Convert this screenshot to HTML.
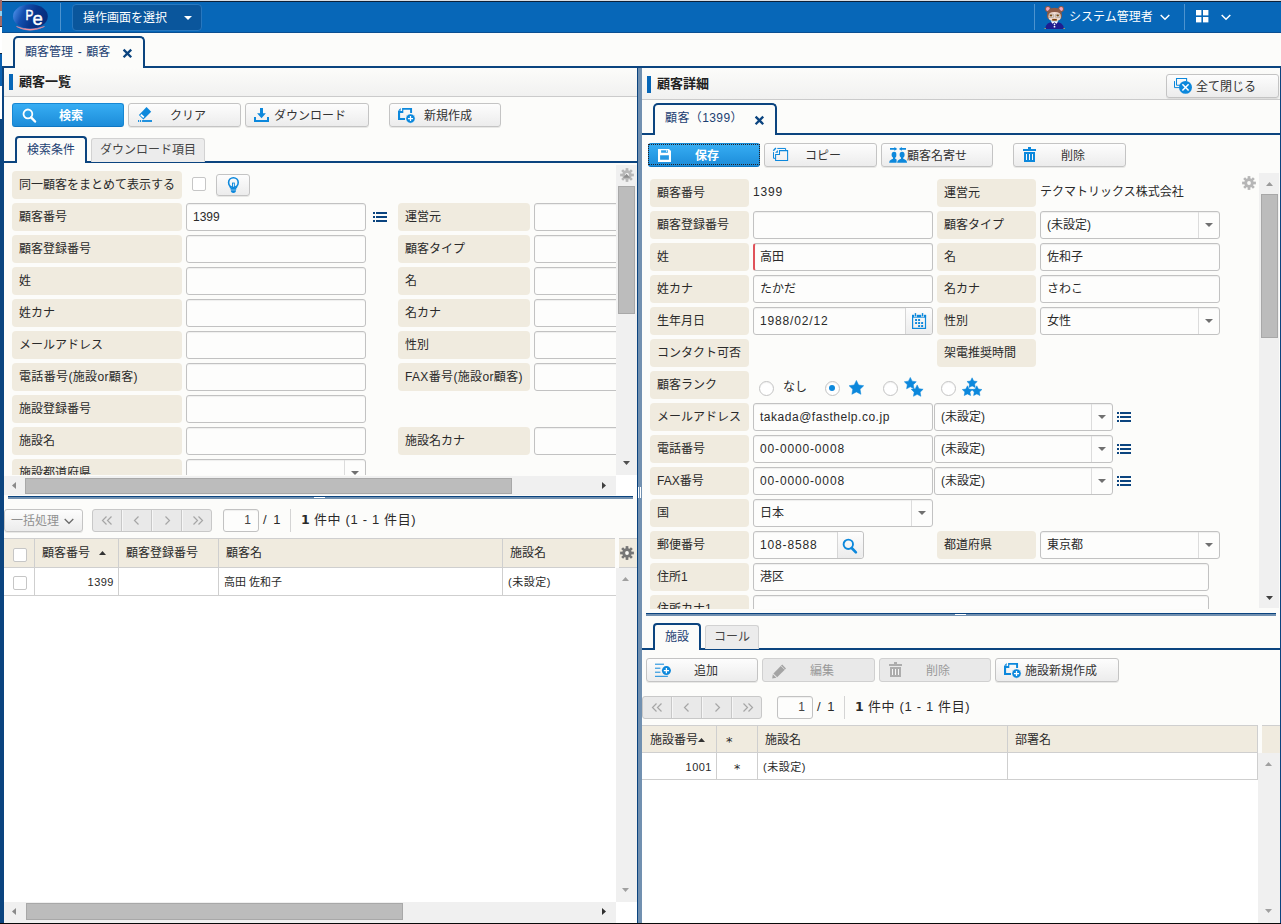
<!DOCTYPE html><html lang="ja"><head><meta charset="utf-8"><title>顧客管理</title><style>
html,body{margin:0;padding:0;}
body{width:1281px;height:924px;position:relative;overflow:hidden;background:#fcfcfa;
 font-family:"Liberation Sans","Noto Sans CJK JP",sans-serif;font-size:12px;color:#2a2a2a;}
div,span,i,b{position:absolute;box-sizing:border-box;white-space:nowrap;}
svg{position:absolute;overflow:visible;}
b{font-weight:bold;}
.lb{background:#f0ebdf;border-radius:4px;padding-left:7px;line-height:29px;}
.in{background:#fdfdfc;border:1px solid #c2c2c2;border-radius:3px;padding-left:6px;line-height:27px;
 box-shadow:inset 0 1px 1px rgba(0,0,0,.06);}
.in span{position:static;}
.se .sc{right:20px;top:0;width:1px;height:100%;background:#dcdcdc;}
.se .ca{right:6px;top:11px;width:0;height:0;border-left:4px solid transparent;border-right:4px solid transparent;border-top:4px solid #707070;}
.bt{border:1px solid #c4c4c4;border-radius:3px;background:linear-gradient(#fdfdfd,#ececec);
 box-shadow:0 1px 0 rgba(0,0,0,.08);line-height:22px;color:#333;}
.bt .t{top:1px;}
.bp{border:1px solid #1787d3;border-bottom-color:#0e76c2;border-radius:3px;background:linear-gradient(#37adf3,#1c8cd9);color:#fff;font-weight:bold;line-height:22px;}
.bp .t{top:1px;}
.bd{border:1px solid #d0d0d0;border-radius:3px;background:#e9e9e9;color:#9a9a9a;line-height:22px;}
.bd .t{top:1px;}
.clip{overflow:hidden;}
.n{position:static;letter-spacing:.85px;}
.m{position:static;letter-spacing:.52px;}
.gh{background:#f0ebdf;line-height:27px;}
.vl{width:1px;background:#cfcfcf;}
.hl{height:1px;background:#cfcfcf;}
.sbt{background:#f0f0f0;}
.sbh{background:#bcbcbc;border:1px solid #a8a8a8;}
.ar{width:0;height:0;}
.pg{border:1px solid #c8c8c8;background:#e9e9e9;border-radius:3px;}
.pg i{top:0;width:2px;height:100%;background:#c8c8c8;border-right:1px solid #f6f6f6;}
.pg span{top:0;line-height:20px;color:#9a9a9a;font-size:15px;width:30px;text-align:center;}
</style></head><body>
<div style="left:0px;top:0px;width:1281px;height:1px;background:#d9dde3;"></div>
<div style="left:0px;top:1px;width:1281px;height:1px;background:#0c2038;"></div>
<div style="left:0px;top:0px;width:2px;height:26px;background:#a26a68;"></div>
<div style="left:0px;top:26px;width:2px;height:1px;background:#3a2020;"></div>
<div style="left:0px;top:27px;width:2px;height:27px;background:#ffffff;"></div>
<div style="left:0px;top:53px;width:2px;height:1px;background:#10253c;"></div>
<div style="left:0px;top:54px;width:2px;height:32px;background:#0a60b0;"></div>
<div style="left:0px;top:86px;width:2px;height:33px;background:#ffffff;"></div>
<div style="left:0px;top:119px;width:2px;height:804px;background:#0b447f;"></div>
<div style="left:2px;top:2px;width:1279px;height:30px;background:#0767b8;"></div>
<div style="left:2px;top:32px;width:1279px;height:1px;background:#0a4f92;"></div>
<svg style="left:12px;top:4px" width="38" height="28" viewBox="0 0 38 28"><defs><linearGradient id="lg" x1="0" y1="0.3" x2="1" y2="0.6"><stop offset="0" stop-color="#4b8de6"/><stop offset="0.28" stop-color="#1450b0"/><stop offset="0.6" stop-color="#08368c"/><stop offset="1" stop-color="#062c7c"/></linearGradient></defs><path d="M4.5 22.5 Q17.5 30 32.5 22.5 Q17.5 27.5 4.5 22.5Z" fill="#f58ea0" stroke="#f58ea0" stroke-width=".5"/><ellipse cx="18.4" cy="12.4" rx="17.4" ry="12.2" fill="url(#lg)"/><text transform="translate(13.6 15.6) scale(.76 1)" font-family="Liberation Sans,sans-serif" font-size="15.5" fill="#fff" stroke="#fff" stroke-width=".5">P</text><text x="20.6" y="20.6" font-family="Liberation Sans,sans-serif" font-size="18.5" fill="#fff" stroke="#fff" stroke-width=".4">e</text></svg>
<div style="left:60px;top:3px;width:1px;height:28px;background:#4d93cf;"></div>
<div style="left:0px;top:11px;width:2px;height:5px;background:#8fd0f0;"></div>
<div style="left:72px;top:4px;width:130px;height:27px;background:#0a569c;border:1px solid #2877be;border-radius:4px;"></div>
<span style="left:83px;top:5px;line-height:26px;color:#fff;font-size:12px;font-weight:400;">操作画面を選択</span>
<div style="left:184px;top:16px;width:0px;height:0px;border-left:4px solid transparent;border-right:4px solid transparent;border-top:4px solid #fff;"></div>
<div style="left:1034px;top:4px;width:1px;height:26px;background:#4d93cf;"></div>
<svg style="left:1045px;top:6px" width="19" height="23" viewBox="0 0 19 23"><circle cx="2.9" cy="3" r="2.9" fill="#8d5b46"/><circle cx="16.1" cy="3" r="2.9" fill="#8d5b46"/><circle cx="2.9" cy="3" r="1.9" fill="#f8a3ba"/><circle cx="16.1" cy="3" r="1.9" fill="#f8a3ba"/><path d="M1.9 9.5 Q1.9 1.8 9.5 1.8 Q17 1.8 17 9.5 Q17 14.6 9.5 14.6 Q1.9 14.6 1.9 9.5Z" fill="#8d5b46"/><path d="M3.4 10.4 Q3.4 6 9.5 6 Q15.9 6 15.9 10.4 Q15.9 15.2 9.5 15.2 Q3.4 15.2 3.4 10.4Z" fill="#f1dbd0"/><rect x="4" y="8.2" width="4.6" height="3.4" rx=".8" fill="#e4dcd2" stroke="#9a8f88" stroke-width=".6"/><rect x="10.4" y="8.2" width="4.6" height="3.4" rx=".8" fill="#e4dcd2" stroke="#9a8f88" stroke-width=".6"/><ellipse cx="6" cy="9.6" rx="1.3" ry="1" fill="#7a4a14"/><ellipse cx="12.7" cy="9.6" rx="1.3" ry="1" fill="#7a4a14"/><rect x="7.2" y="12.9" width="4.6" height="1.8" fill="#7a3f08"/><path d="M0.3 22.9 Q0.6 15.8 9.5 15.8 Q18.6 15.8 18.9 22.9Z" fill="#1f1d90"/><path d="M5.8 15.2 H13.2 L11.6 17.8 L9.5 16.2 L7.4 17.8Z" fill="#fff"/><circle cx="9.5" cy="18.4" r=".8" fill="#fff"/><circle cx="9.5" cy="20.7" r=".9" fill="#fff"/><rect x="-0.6" y="22" width="1.6" height="1" fill="#9a9a6a"/><rect x="18.4" y="22" width="1.6" height="1" fill="#9a9a6a"/></svg>
<span style="left:1069px;top:4px;line-height:26px;color:#fff;font-size:12px;font-weight:400;">システム管理者</span>
<svg style="left:1160px;top:14px" width="10" height="7" viewBox="0 0 10 7"><path d="M0.7 1 L5 5.3 L9.3 1" fill="none" stroke="#fff" stroke-width="1.5"/></svg>
<div style="left:1184px;top:4px;width:1px;height:26px;background:#4d93cf;"></div>
<svg style="left:1196px;top:10px" width="13" height="13" viewBox="0 0 13 13"><rect x="0" y="0" width="5.4" height="5.4" fill="#fff"/><rect x="7" y="0" width="5.4" height="5.4" fill="#fff"/><rect x="0" y="7" width="5.4" height="5.4" fill="#fff"/><rect x="7" y="7" width="5.4" height="5.4" fill="#fff"/></svg>
<svg style="left:1221px;top:14px" width="10" height="7" viewBox="0 0 10 7"><path d="M0.7 1 L5 5.3 L9.3 1" fill="none" stroke="#fff" stroke-width="1.5"/></svg>
<div style="left:2px;top:66px;width:1279px;height:2px;background:#0b447f;"></div>
<div style="left:13px;top:36px;width:132px;height:32px;border:2px solid #0b447f;border-bottom:none;border-radius:5px 5px 0 0;background:#fcfcfa;"></div>
<span style="left:25px;top:39px;line-height:26px;color:#1c3f72;font-size:12px;word-spacing:1.3px;">顧客管理 - 顧客</span>
<svg style="left:122px;top:48px" width="11" height="11" viewBox="0 0 11 11"><path d="M1.6 1.6 L9.2 9.2 M9.2 1.6 L1.6 9.2" stroke="#0b447f" stroke-width="2.3" fill="none"/></svg>
<div style="left:2px;top:66px;width:2px;height:857px;background:#0b447f;"></div>
<div style="left:637px;top:68px;width:1px;height:855px;background:#0b447f;"></div>
<div style="left:638px;top:68px;width:4px;height:855px;background:#7190b0;"></div>
<div style="left:638px;top:487px;width:1px;height:11px;background:#fff;"></div>
<div style="left:640px;top:487px;width:1px;height:11px;background:#fff;"></div>
<div style="left:1280px;top:66px;width:1px;height:857px;background:#0b447f;"></div>
<div style="left:4px;top:68px;width:633px;height:28px;background:linear-gradient(#fcfcfa,#f1f1f0);"></div>
<div style="left:4px;top:96px;width:633px;height:1px;background:#cbcbcb;"></div>
<div style="left:9px;top:74px;width:4px;height:16px;background:#0767b8;"></div>
<b style="left:19px;top:69px;line-height:26px;font-size:13px;color:#222;">顧客一覧</b>
<div class="bp" style="left:12px;top:103px;width:112px;height:24px;"><svg style="left:9px;top:4px" width="15" height="15" viewBox="0 0 16 16"><circle cx="6.3" cy="6.3" r="4.7" fill="none" stroke="#fff" stroke-width="1.9"/><path d="M9.7 10 L13.9 14.4" stroke="#fff" stroke-width="2.6" stroke-linecap="round"/></svg><span class="t" style="left:46px;">検索</span></div>
<div class="bt" style="left:128px;top:103px;width:113px;height:24px;"><svg style="left:9px;top:3px" width="15" height="15" viewBox="0 0 15 15"><polygon points="8.55,0 13.2,4.7 5.4,12.5 0.9,8" fill="#0c88dc"/><polygon points="3.5,6.9 6.4,9.8 5.2,11.1 2.2,8.2" fill="#fff"/><rect x="0" y="13.1" width="1.1" height="1.8" fill="#0c88dc"/><rect x="1.9" y="13.1" width="1.2" height="1.8" fill="#0c88dc"/><rect x="4.05" y="13.1" width="9.95" height="1.8" fill="#0c88dc"/></svg><span class="t" style="left:41px;">クリア</span></div>
<div class="bt" style="left:245px;top:103px;width:124px;height:24px;"><svg style="left:7px;top:3px" width="17" height="16" viewBox="0 0 17 16"><path d="M7 1 H10 V6.3 H12.9 L8.5 11.2 L4.1 6.3 H7Z" fill="#0c88dc"/><path d="M2 10 V13.9 H15 V10" fill="none" stroke="#0c88dc" stroke-width="2"/></svg><span class="t" style="left:28px;">ダウンロード</span></div>
<div class="bt" style="left:389px;top:103px;width:112px;height:24px;"><svg style="left:8px;top:3px" width="18" height="17" viewBox="0 0 18 17"><polygon points="2.7,1 2.7,3.7 0,3.7" fill="#0c88dc"/><path d="M4.1 1 H14.05 V5.9 H12.1 V2.8 H5.3 V5.9 H2.1 V11 H7 V12.9 H0 V4.1 H4.1Z" fill="#0c88dc"/><circle cx="12.5" cy="11.55" r="4.6" fill="#0c88dc" stroke="#f6f6f6" stroke-width=".5"/><path d="M12.5 9 V14.1 M9.95 11.55 H15.05" stroke="#fff" stroke-width="1.25"/></svg><span class="t" style="left:34px;">新規作成</span></div>
<div style="left:4px;top:161px;width:633px;height:2px;background:#0b447f;"></div>
<div style="left:91px;top:138px;width:114px;height:24px;background:#ececec;border:1px solid #d2d2d2;border-bottom:none;border-radius:3px 3px 0 0;"></div>
<span style="left:100px;top:139px;line-height:22px;color:#444;font-size:12px;">ダウンロード項目</span>
<div style="left:15px;top:136px;width:72px;height:27px;border:2px solid #0b447f;border-bottom:none;border-radius:4px 4px 0 0;background:#fcfcfa;"></div>
<span style="left:27px;top:139px;line-height:22px;color:#1c3f72;font-size:12px;">検索条件</span>
<div class="clip" style="left:4px;top:163px;width:612px;height:312px;"><div class="lb" style="left:8px;top:8px;width:170px;height:28px;">同一顧客をまとめて表示する</div><div style="left:188px;top:14px;width:14px;height:14px;background:#fff;border:1px solid #c6c6c6;border-radius:2px;"></div><div class="bt" style="left:212px;top:11px;width:34px;height:22px;"><svg style="left:9px;top:1px" width="15" height="18" viewBox="0 0 15 18"><circle cx="7.4" cy="6.5" r="4.8" fill="none" stroke="#0c88dc" stroke-width="1.6"/><path d="M3.7 10.2 L5.3 12.4 V13 H9.5 V12.4 L11.1 10.2" fill="none" stroke="#0c88dc" stroke-width="1.5"/><rect x="6" y="6.6" width="2.8" height="6.4" fill="#0c88dc"/><rect x="6.95" y="7.5" width=".9" height="3.2" fill="#fff"/><path d="M4.8 14.2 H10 Q10 16.9 7.4 16.9 Q4.8 16.9 4.8 14.2Z" fill="#0c88dc"/></svg></div><div class="lb" style="left:8px;top:40px;width:170px;height:28px;">顧客番号</div><div class="in" style="left:182px;top:40px;width:180px;height:28px;">1399</div><div class="lb" style="left:394px;top:40px;width:132px;height:28px;">運営元</div><div class="in" style="left:530px;top:40px;width:180px;height:28px;"></div><div class="lb" style="left:8px;top:72px;width:170px;height:28px;">顧客登録番号</div><div class="in" style="left:182px;top:72px;width:180px;height:28px;"></div><div class="lb" style="left:394px;top:72px;width:132px;height:28px;">顧客タイプ</div><div class="in" style="left:530px;top:72px;width:180px;height:28px;"></div><div class="lb" style="left:8px;top:104px;width:170px;height:28px;">姓</div><div class="in" style="left:182px;top:104px;width:180px;height:28px;"></div><div class="lb" style="left:394px;top:104px;width:132px;height:28px;">名</div><div class="in" style="left:530px;top:104px;width:180px;height:28px;"></div><div class="lb" style="left:8px;top:136px;width:170px;height:28px;">姓カナ</div><div class="in" style="left:182px;top:136px;width:180px;height:28px;"></div><div class="lb" style="left:394px;top:136px;width:132px;height:28px;">名カナ</div><div class="in" style="left:530px;top:136px;width:180px;height:28px;"></div><div class="lb" style="left:8px;top:168px;width:170px;height:28px;">メールアドレス</div><div class="in" style="left:182px;top:168px;width:180px;height:28px;"></div><div class="lb" style="left:394px;top:168px;width:132px;height:28px;">性別</div><div class="in" style="left:530px;top:168px;width:180px;height:28px;"></div><div class="lb" style="left:8px;top:200px;width:170px;height:28px;"><span class="m" style="letter-spacing:.35px">電話番号(施設or顧客)</span></div><div class="in" style="left:182px;top:200px;width:180px;height:28px;"></div><div class="lb" style="left:394px;top:200px;width:132px;height:28px;"><span class="m" style="letter-spacing:.35px">FAX番号(施設or顧客)</span></div><div class="in" style="left:530px;top:200px;width:180px;height:28px;"></div><div class="lb" style="left:8px;top:232px;width:170px;height:28px;">施設登録番号</div><div class="in" style="left:182px;top:232px;width:180px;height:28px;"></div><div class="lb" style="left:8px;top:264px;width:170px;height:28px;">施設名</div><div class="in" style="left:182px;top:264px;width:180px;height:28px;"></div><div class="lb" style="left:394px;top:264px;width:132px;height:28px;">施設名カナ</div><div class="in" style="left:530px;top:264px;width:180px;height:28px;"></div><div class="lb" style="left:8px;top:296px;width:170px;height:28px;">施設都道府県</div><div class="in se" style="left:182px;top:296px;width:180px;height:28px;"><span></span><i class="sc"></i><i class="ca"></i></div><svg style="left:369px;top:49px" width="14" height="10" viewBox="0 0 14 10"><rect x="0" y="0" width="2" height="2" fill="#0b447f"/><rect x="3" y="0" width="11" height="2" fill="#0b447f"/><rect x="0" y="4" width="2" height="2" fill="#0b447f"/><rect x="3" y="4" width="11" height="2" fill="#0b447f"/><rect x="0" y="8" width="2" height="2" fill="#0b447f"/><rect x="3" y="8" width="11" height="2" fill="#0b447f"/></svg></div>
<div class="sbt" style="left:616px;top:165px;width:21px;height:310px;"></div>
<svg style="left:620px;top:168px" width="14" height="14" viewBox="0 0 14 14"><g transform="translate(7 7)"><rect x="-1.35" y="-6.9" width="2.7" height="3.2" fill="#b8b8b8" transform="rotate(0)"/><rect x="-1.35" y="-6.9" width="2.7" height="3.2" fill="#b8b8b8" transform="rotate(45)"/><rect x="-1.35" y="-6.9" width="2.7" height="3.2" fill="#b8b8b8" transform="rotate(90)"/><rect x="-1.35" y="-6.9" width="2.7" height="3.2" fill="#b8b8b8" transform="rotate(135)"/><rect x="-1.35" y="-6.9" width="2.7" height="3.2" fill="#b8b8b8" transform="rotate(180)"/><rect x="-1.35" y="-6.9" width="2.7" height="3.2" fill="#b8b8b8" transform="rotate(225)"/><rect x="-1.35" y="-6.9" width="2.7" height="3.2" fill="#b8b8b8" transform="rotate(270)"/><rect x="-1.35" y="-6.9" width="2.7" height="3.2" fill="#b8b8b8" transform="rotate(315)"/><circle r="4.7" fill="#b8b8b8"/><circle r="1.9" fill="#fafafa"/><path d="M-3.9 2.8 L-0.4 -1.2 L3.1 2.8Z" fill="#8e8e8e"/></g></svg>
<div class="sbh" style="left:618px;top:186px;width:17px;height:128px;"></div>
<svg style="left:623px;top:461px" width="7" height="4" viewBox="0 0 7 4"><path d="M0 0 L3.5 4 L7 0Z" fill="#505050"/></svg>
<div class="sbt" style="left:4px;top:476px;width:612px;height:19px;"></div>
<div style="left:616px;top:475px;width:21px;height:21px;background:#fff;"></div>
<svg style="left:12px;top:482px" width="4" height="7" viewBox="0 0 4 7"><path d="M4 0 L0 3.5 L4 7Z" fill="#8a8a8a"/></svg>
<div class="sbh" style="left:25px;top:478px;width:487px;height:16px;"></div>
<svg style="left:602px;top:482px" width="4" height="7" viewBox="0 0 4 7"><path d="M0 0 L4 3.5 L0 7Z" fill="#404040"/></svg>
<div style="left:8px;top:496px;width:625px;height:1px;background:#0b447f;"></div>
<div style="left:8px;top:497px;width:625px;height:2px;background:#7190b0;"></div>
<div style="left:314px;top:497px;width:11px;height:1px;background:#fff;"></div>
<div class="bt" style="left:4px;top:509px;width:79px;height:23px;color:#909090;"><span class="t" style="left:6px;top:0;">一括処理</span><svg style="left:59px;top:8px" width="10" height="7" viewBox="0 0 10 7"><path d="M0.7 1 L5 5.3 L9.3 1" fill="none" stroke="#6a6a6a" stroke-width="1.25"/></svg></div>
<div class="pg" style="left:92px;top:509px;width:120px;height:23px;"><i style="left:28px"></i><i style="left:58px"></i><i style="left:88px"></i><svg style="left:0;top:6px" width="120" height="10"><path d="M13.5 0.5 L9.5 4.5 L13.5 8.5" fill="none" stroke="#a6a6a6" stroke-width="1.2"/><path d="M18.5 0.5 L14.5 4.5 L18.5 8.5" fill="none" stroke="#a6a6a6" stroke-width="1.2"/><path d="M45.5 0.5 L41.5 4.5 L45.5 8.5" fill="none" stroke="#a6a6a6" stroke-width="1.2"/><path d="M72.5 0.5 L76.5 4.5 L72.5 8.5" fill="none" stroke="#a6a6a6" stroke-width="1.2"/><path d="M100.5 0.5 L104.5 4.5 L100.5 8.5" fill="none" stroke="#a6a6a6" stroke-width="1.2"/><path d="M105.5 0.5 L109.5 4.5 L105.5 8.5" fill="none" stroke="#a6a6a6" stroke-width="1.2"/></svg></div>
<div class="in" style="left:223px;top:509px;width:36px;height:23px;text-align:right;padding-right:7px;line-height:20px;color:#444;">1</div>
<span style="left:263px;top:509px;line-height:22px;font-size:13px;word-spacing:2px;letter-spacing:.5px;">/ 1</span>
<div style="left:290px;top:509px;width:1px;height:23px;background:#d4d4d4;"></div>
<span style="left:301px;top:509px;line-height:22px;font-size:13px;letter-spacing:.65px;"><b style="position:static;font-family:DejaVu Sans,sans-serif;font-size:12.5px;letter-spacing:0">1</b> 件中 (1 - 1 件目)</span>
<div class="gh" style="left:4px;top:539px;width:611px;height:29px;"></div>
<div class="gh" style="left:619px;top:539px;width:18px;height:29px;"></div>
<div style="left:4px;top:568px;width:612px;height:334px;background:#fff;"></div>
<div class="vl" style="left:34px;top:539px;width:1px;height:57px;"></div>
<div class="vl" style="left:118px;top:539px;width:1px;height:57px;"></div>
<div class="vl" style="left:218px;top:539px;width:1px;height:57px;"></div>
<div class="vl" style="left:502px;top:539px;width:1px;height:57px;"></div>
<div class="hl" style="left:4px;top:567px;width:611px;height:1px;"></div>
<div class="hl" style="left:619px;top:567px;width:18px;height:1px;"></div>
<div class="hl" style="left:4px;top:538px;width:611px;height:1px;"></div>
<div class="hl" style="left:619px;top:538px;width:18px;height:1px;"></div>
<div class="hl" style="left:4px;top:595px;width:612px;height:1px;"></div>
<div style="left:13px;top:548px;width:14px;height:14px;background:#fff;border:1px solid #c6c6c6;border-radius:2px;"></div>
<div style="left:13px;top:576px;width:14px;height:14px;background:#fff;border:1px solid #c6c6c6;border-radius:2px;"></div>
<span style="left:42px;top:540px;line-height:27px;">顧客番号</span>
<svg style="left:99px;top:551px" width="7" height="4" viewBox="0 0 7 4"><path d="M0 4 L3.5 0 L7 4Z" fill="#333"/></svg>
<span style="left:126px;top:540px;line-height:27px;">顧客登録番号</span>
<span style="left:226px;top:540px;line-height:27px;">顧客名</span>
<span style="left:510px;top:540px;line-height:27px;">施設名</span>
<svg style="left:620px;top:546px" width="14" height="14" viewBox="0 0 14 14"><g transform="translate(7 7)"><rect x="-1.35" y="-6.9" width="2.7" height="3.2" fill="#767676" transform="rotate(0)"/><rect x="-1.35" y="-6.9" width="2.7" height="3.2" fill="#767676" transform="rotate(45)"/><rect x="-1.35" y="-6.9" width="2.7" height="3.2" fill="#767676" transform="rotate(90)"/><rect x="-1.35" y="-6.9" width="2.7" height="3.2" fill="#767676" transform="rotate(135)"/><rect x="-1.35" y="-6.9" width="2.7" height="3.2" fill="#767676" transform="rotate(180)"/><rect x="-1.35" y="-6.9" width="2.7" height="3.2" fill="#767676" transform="rotate(225)"/><rect x="-1.35" y="-6.9" width="2.7" height="3.2" fill="#767676" transform="rotate(270)"/><rect x="-1.35" y="-6.9" width="2.7" height="3.2" fill="#767676" transform="rotate(315)"/><circle r="4.7" fill="#767676"/><circle r="1.9" fill="#fbfaf6"/></g></svg>
<span style="left:35px;top:569px;width:79px;text-align:right;line-height:27px;font-size:11px;letter-spacing:.5px;">1399</span>
<span style="left:224px;top:569px;line-height:27px;font-size:11px;">高田 佐和子</span>
<span style="left:508px;top:569px;line-height:27px;font-size:11px;letter-spacing:.5px;">(未設定)</span>
<div class="sbt" style="left:616px;top:568px;width:21px;height:334px;"></div>
<svg style="left:622px;top:577px" width="7" height="4" viewBox="0 0 7 4"><path d="M0 4 L3.5 0 L7 4Z" fill="#a0a0a0"/></svg>
<svg style="left:622px;top:888px" width="7" height="4" viewBox="0 0 7 4"><path d="M0 0 L3.5 4 L7 0Z" fill="#a0a0a0"/></svg>
<div class="sbt" style="left:4px;top:902px;width:612px;height:21px;"></div>
<div style="left:616px;top:902px;width:21px;height:21px;background:#fff;"></div>
<svg style="left:12px;top:908px" width="4" height="7" viewBox="0 0 4 7"><path d="M4 0 L0 3.5 L4 7Z" fill="#8a8a8a"/></svg>
<div class="sbh" style="left:26px;top:903px;width:377px;height:17px;"></div>
<svg style="left:602px;top:908px" width="4" height="7" viewBox="0 0 4 7"><path d="M0 0 L4 3.5 L0 7Z" fill="#303030"/></svg>
<div style="left:642px;top:68px;width:638px;height:31px;background:linear-gradient(#fcfcfa,#f1f1f0);"></div>
<div style="left:642px;top:99px;width:638px;height:1px;background:#cbcbcb;"></div>
<div style="left:647px;top:76px;width:4px;height:17px;background:#0767b8;"></div>
<b style="left:657px;top:71px;line-height:26px;font-size:13px;color:#222;">顧客詳細</b>
<div class="bt" style="left:1166px;top:74px;width:113px;height:24px;"><svg style="left:7px;top:2px" width="19" height="18" viewBox="0 0 19 18"><path d="M2.5 8.3 V1.5 H12.6 V4.5 M2.5 8.3 H6" fill="none" stroke="#0c88dc" stroke-width="1.05"/><path d="M0.5 4.1 V10.6 H5.5" fill="none" stroke="#0c88dc" stroke-width="1"/><circle cx="11.5" cy="10.4" r="6.45" fill="#0c88dc"/><path d="M8.4 7.3 L14.6 13.5 M14.6 7.3 L8.4 13.5" stroke="#fff" stroke-width="1.5"/></svg><span class="t" style="left:29px;">全て閉じる</span></div>
<div style="left:642px;top:133px;width:639px;height:2px;background:#0b447f;"></div>
<div style="left:653px;top:103px;width:124px;height:32px;border:2px solid #0b447f;border-bottom:none;border-radius:5px 5px 0 0;background:#fcfcfa;"></div>
<span style="left:665px;top:105px;line-height:26px;color:#1c3f72;font-size:12px;letter-spacing:.4px;">顧客（1399）</span>
<svg style="left:754px;top:115px" width="11" height="11" viewBox="0 0 11 11"><path d="M1.6 1.6 L9.2 9.2 M9.2 1.6 L1.6 9.2" stroke="#0b447f" stroke-width="2.3" fill="none"/></svg>
<div class="clip" style="left:642px;top:135px;width:618px;height:474px;"><div class="bp" style="left:6px;top:8px;width:112px;height:24px;"><svg style="left:9px;top:4px" width="14" height="15" viewBox="0 0 14 15"><path fill-rule="evenodd" fill="#fff" d="M0 .9H11L13 3V14H0Z M3.1 2.3H9.9V4.8H3.1Z M2.1 7.2H10.9V11.7H2.1Z"/><rect x="8.2" y="2.3" width=".9" height="1.6" fill="#fff"/></svg><span class="t" style="left:46px;">保存</span></div><div style="left:6px;top:9px;width:112px;height:21px;border:1px dotted #2a2222;"></div><div class="bt" style="left:122px;top:8px;width:113px;height:24px;"><svg style="left:8px;top:3px" width="16" height="15" viewBox="0 0 16 15"><path d="M6.5 3.6 H14.6 V13.4 H2.6 V7.5 H6.5Z" fill="none" stroke="#0c88dc" stroke-width="1.05"/><polygon points="4.9,3.1 4.9,5.8 2.1,5.8" fill="#0c88dc"/><path d="M4.3 1.45 H12.6 V3.2 M0.5 5.1 V11.3 H2.2" fill="none" stroke="#0c88dc" stroke-width="1"/><path d="M2.9 1.1 L0.3 3.7" stroke="#0c88dc" stroke-width="1.4"/></svg><span class="t" style="left:40px;">コピー</span></div><div class="bt" style="left:239px;top:8px;width:112px;height:24px;"><svg style="left:7px;top:3px" width="19" height="16" viewBox="0 0 19 16"><defs><clipPath id="pc"><rect x="0" y="0" width="7.6" height="16"/></clipPath></defs><path d="M1 0.95 H5.4 V0 L8.3 1.9 L5.4 3.8 V2.85 H1Z" fill="#0c88dc"/><path d="M17 0.95 H12.8 V0 L9.9 1.9 L12.8 3.8 V2.85 H17Z" fill="#0c88dc"/><g clip-path="url(#pc)"><ellipse cx="5.1" cy="7.8" rx="2.5" ry="2.95" fill="#0c88dc"/><path d="M0.09999999999999964 15.8 Q0.09999999999999964 13.3 2.3 12.5 L3.9999999999999996 11.7 V10 H6.199999999999999 V11.7 L7.8999999999999995 12.5 Q10.1 13.3 10.1 15.8Z" fill="#0c88dc"/></g><g><ellipse cx="13.1" cy="7.8" rx="2.5" ry="2.95" fill="#0c88dc"/><path d="M8.1 15.8 Q8.1 13.3 10.3 12.5 L12.0 11.7 V10 H14.2 V11.7 L15.899999999999999 12.5 Q18.1 13.3 18.1 15.8Z" fill="#0c88dc"/></g></svg><span class="t" style="left:25px;">顧客名寄せ</span></div><div class="bt" style="left:371px;top:8px;width:113px;height:24px;"><svg style="left:9px;top:3px" width="13" height="16" viewBox="0 0 13 16"><rect x="5" y="0" width="3" height="2.2" fill="#0c88dc"/><rect x="0" y="2" width="13" height="2" fill="#0c88dc"/><rect x="1" y="5" width="11" height="10" fill="#0c88dc"/><rect x="3" y="7" width="1" height="6" fill="#f6f6f6"/><rect x="6" y="7" width="1" height="6" fill="#f6f6f6"/><rect x="9" y="7" width="1" height="6" fill="#f6f6f6"/></svg><span class="t" style="left:47px;">削除</span></div><div class="lb" style="left:8px;top:44px;width:99px;height:28px;">顧客番号</div><span style="left:111px;top:44px;line-height:27px;"><span class="n">1399</span></span><div class="lb" style="left:295px;top:44px;width:99px;height:28px;">運営元</div><span style="left:398px;top:44px;line-height:27px;">テクマトリックス株式会社</span><div class="lb" style="left:8px;top:76px;width:99px;height:28px;">顧客登録番号</div><div class="in" style="left:111px;top:76px;width:180px;height:28px;"></div><div class="lb" style="left:295px;top:76px;width:99px;height:28px;">顧客タイプ</div><div class="in se" style="left:398px;top:76px;width:180px;height:28px;"><span>(未設定)</span><i class="sc"></i><i class="ca"></i></div><div class="lb" style="left:8px;top:108px;width:99px;height:28px;">姓</div><div class="in" style="left:111px;top:108px;width:180px;height:28px;border-left:2px solid #e0525a;padding-left:5px;">高田</div><div class="lb" style="left:295px;top:108px;width:99px;height:28px;">名</div><div class="in" style="left:398px;top:108px;width:180px;height:28px;">佐和子</div><div class="lb" style="left:8px;top:140px;width:99px;height:28px;">姓カナ</div><div class="in" style="left:111px;top:140px;width:180px;height:28px;">たかだ</div><div class="lb" style="left:295px;top:140px;width:99px;height:28px;">名カナ</div><div class="in" style="left:398px;top:140px;width:180px;height:28px;">さわこ</div><div class="lb" style="left:8px;top:172px;width:99px;height:28px;">生年月日</div><div class="in" style="left:111px;top:172px;width:180px;height:28px;"><span class="n">1988/02/12</span></div><div style="left:263px;top:173px;width:27px;height:26px;background:linear-gradient(#fdfdfd,#ececec);border-left:1px solid #d6d6d6;border-radius:0 3px 3px 0;"><svg style="left:6px;top:5px" width="15" height="16" viewBox="0 0 15 16"><rect x="0.6" y="2.5" width="12.9" height="12.9" fill="none" stroke="#0c88dc" stroke-width="1.2"/><rect x="0" y="1.9" width="14.1" height="2.8" fill="#0c88dc"/><rect x="2.1999999999999997" y="0" width="2.5" height="4.1" fill="#f4f4f4"/><rect x="2.8" y="0" width="1.3" height="3.6" rx=".6" fill="#0c88dc"/><rect x="9.3" y="0" width="2.5" height="4.1" fill="#f4f4f4"/><rect x="9.9" y="0" width="1.3" height="3.6" rx=".6" fill="#0c88dc"/><rect x="3.05" y="6.05" width="2" height="2" rx=".3" fill="#0c88dc"/><rect x="6.08" y="6.05" width="2" height="2" rx=".3" fill="#0c88dc"/><rect x="3.05" y="9.08" width="2" height="2" rx=".3" fill="#0c88dc"/><rect x="6.08" y="9.08" width="2" height="2" rx=".3" fill="#0c88dc"/><rect x="9.11" y="9.08" width="2" height="2" rx=".3" fill="#0c88dc"/><rect x="6.08" y="12.11" width="2" height="2" rx=".3" fill="#0c88dc"/><rect x="9.11" y="12.11" width="2" height="2" rx=".3" fill="#0c88dc"/></svg></div><div class="lb" style="left:295px;top:172px;width:99px;height:28px;">性別</div><div class="in se" style="left:398px;top:172px;width:180px;height:28px;"><span>女性</span><i class="sc"></i><i class="ca"></i></div><div class="lb" style="left:8px;top:204px;width:99px;height:28px;">コンタクト可否</div><div class="lb" style="left:295px;top:204px;width:99px;height:28px;">架電推奨時間</div><div class="lb" style="left:8px;top:236px;width:99px;height:28px;">顧客ランク</div><div style="left:116.5px;top:245.5px;width:15px;height:15px;border:1px solid #c4c4c4;border-radius:50%;background:#fff;box-shadow:inset 0 1px 1px rgba(0,0,0,.05);"></div><div style="left:182.5px;top:245.5px;width:15px;height:15px;border:1px solid #c4c4c4;border-radius:50%;background:#fff;box-shadow:inset 0 1px 1px rgba(0,0,0,.05);"><i style="left:3.5px;top:3.5px;width:6px;height:6px;border-radius:50%;background:#0c88dc;"></i></div><div style="left:240.5px;top:245.5px;width:15px;height:15px;border:1px solid #c4c4c4;border-radius:50%;background:#fff;box-shadow:inset 0 1px 1px rgba(0,0,0,.05);"></div><div style="left:298.5px;top:245.5px;width:15px;height:15px;border:1px solid #c4c4c4;border-radius:50%;background:#fff;box-shadow:inset 0 1px 1px rgba(0,0,0,.05);"></div><span style="left:141px;top:239px;line-height:27px;">なし</span><svg style="left:206px;top:241px" width="22" height="22" viewBox="0 0 22 22"><polygon points="8.40,4.40 10.66,8.99 15.72,9.72 12.06,13.29 12.93,18.33 8.40,15.95 3.87,18.33 4.74,13.29 1.08,9.72 6.14,8.99" fill="#0c88dc" stroke="#0c88dc" stroke-width=".5" stroke-linejoin="round"/></svg><svg style="left:261px;top:241px" width="22" height="22" viewBox="0 0 22 22"><polygon points="7.30,1.40 9.15,5.15 13.29,5.75 10.30,8.67 11.00,12.80 7.30,10.85 3.60,12.80 4.30,8.67 1.31,5.75 5.45,5.15" fill="#0c88dc" stroke="#0c88dc" stroke-width=".5" stroke-linejoin="round"/><polygon points="14.15,8.90 16.00,12.65 20.14,13.25 17.15,16.17 17.85,20.30 14.15,18.35 10.45,20.30 11.15,16.17 8.16,13.25 12.30,12.65" fill="#0c88dc" stroke="#0c88dc" stroke-width=".5" stroke-linejoin="round"/></svg><svg style="left:319px;top:241px" width="22" height="22" viewBox="0 0 22 22"><polygon points="11.10,1.80 12.69,5.02 16.24,5.53 13.67,8.03 14.27,11.57 11.10,9.90 7.93,11.57 8.53,8.03 5.96,5.53 9.51,5.02" fill="#0c88dc" stroke="#0c88dc" stroke-width=".5" stroke-linejoin="round"/><polygon points="6.40,9.80 7.99,13.02 11.54,13.53 8.97,16.03 9.57,19.57 6.40,17.90 3.23,19.57 3.83,16.03 1.26,13.53 4.81,13.02" fill="#0c88dc" stroke="#0c88dc" stroke-width=".5" stroke-linejoin="round"/><polygon points="15.80,9.80 17.39,13.02 20.94,13.53 18.37,16.03 18.97,19.57 15.80,17.90 12.63,19.57 13.23,16.03 10.66,13.53 14.21,13.02" fill="#0c88dc" stroke="#0c88dc" stroke-width=".5" stroke-linejoin="round"/></svg><div class="lb" style="left:8px;top:268px;width:99px;height:28px;">メールアドレス</div><div class="in" style="left:111px;top:268px;width:180px;height:28px;"><span class="m">takada@fasthelp.co.jp</span></div><div class="in se" style="left:292px;top:268px;width:179px;height:28px;"><span>(未設定)</span><i class="sc"></i><i class="ca"></i></div><svg style="left:475px;top:277px" width="14" height="10" viewBox="0 0 14 10"><rect x="0" y="0" width="2" height="2" fill="#0b447f"/><rect x="3" y="0" width="11" height="2" fill="#0b447f"/><rect x="0" y="4" width="2" height="2" fill="#0b447f"/><rect x="3" y="4" width="11" height="2" fill="#0b447f"/><rect x="0" y="8" width="2" height="2" fill="#0b447f"/><rect x="3" y="8" width="11" height="2" fill="#0b447f"/></svg><div class="lb" style="left:8px;top:300px;width:99px;height:28px;">電話番号</div><div class="in" style="left:111px;top:300px;width:180px;height:28px;"><span class="n">00-0000-0008</span></div><div class="in se" style="left:292px;top:300px;width:179px;height:28px;"><span>(未設定)</span><i class="sc"></i><i class="ca"></i></div><svg style="left:475px;top:309px" width="14" height="10" viewBox="0 0 14 10"><rect x="0" y="0" width="2" height="2" fill="#0b447f"/><rect x="3" y="0" width="11" height="2" fill="#0b447f"/><rect x="0" y="4" width="2" height="2" fill="#0b447f"/><rect x="3" y="4" width="11" height="2" fill="#0b447f"/><rect x="0" y="8" width="2" height="2" fill="#0b447f"/><rect x="3" y="8" width="11" height="2" fill="#0b447f"/></svg><div class="lb" style="left:8px;top:332px;width:99px;height:28px;">FAX番号</div><div class="in" style="left:111px;top:332px;width:180px;height:28px;"><span class="n">00-0000-0008</span></div><div class="in se" style="left:292px;top:332px;width:179px;height:28px;"><span>(未設定)</span><i class="sc"></i><i class="ca"></i></div><svg style="left:475px;top:341px" width="14" height="10" viewBox="0 0 14 10"><rect x="0" y="0" width="2" height="2" fill="#0b447f"/><rect x="3" y="0" width="11" height="2" fill="#0b447f"/><rect x="0" y="4" width="2" height="2" fill="#0b447f"/><rect x="3" y="4" width="11" height="2" fill="#0b447f"/><rect x="0" y="8" width="2" height="2" fill="#0b447f"/><rect x="3" y="8" width="11" height="2" fill="#0b447f"/></svg><div class="lb" style="left:8px;top:364px;width:99px;height:28px;">国</div><div class="in se" style="left:111px;top:364px;width:180px;height:28px;"><span>日本</span><i class="sc"></i><i class="ca"></i></div><div class="lb" style="left:8px;top:396px;width:99px;height:28px;">郵便番号</div><div class="in" style="left:111px;top:396px;width:111px;height:28px;"><span class="n">108-8588</span></div><div style="left:195px;top:397px;width:26px;height:26px;background:linear-gradient(#fdfdfd,#ececec);border-left:1px solid #d6d6d6;border-radius:0 3px 3px 0;"><svg style="left:4px;top:6px" width="16" height="16" viewBox="0 0 16 16"><circle cx="6.3" cy="6.3" r="4.7" fill="none" stroke="#0c88dc" stroke-width="1.9"/><path d="M9.7 10 L13.9 14.4" stroke="#0c88dc" stroke-width="2.6" stroke-linecap="round"/></svg></div><div class="lb" style="left:295px;top:396px;width:99px;height:28px;">都道府県</div><div class="in se" style="left:398px;top:396px;width:180px;height:28px;"><span>東京都</span><i class="sc"></i><i class="ca"></i></div><div class="lb" style="left:8px;top:428px;width:99px;height:28px;">住所1</div><div class="in" style="left:111px;top:428px;width:456px;height:28px;">港区</div><div class="lb" style="left:8px;top:460px;width:99px;height:28px;">住所カナ1</div><div class="in" style="left:111px;top:460px;width:456px;height:28px;"></div></div>
<svg style="left:1242px;top:176px" width="14" height="14" viewBox="0 0 14 14"><g transform="translate(7 7)"><rect x="-1.35" y="-6.9" width="2.7" height="3.2" fill="#b6b6b6" transform="rotate(0)"/><rect x="-1.35" y="-6.9" width="2.7" height="3.2" fill="#b6b6b6" transform="rotate(45)"/><rect x="-1.35" y="-6.9" width="2.7" height="3.2" fill="#b6b6b6" transform="rotate(90)"/><rect x="-1.35" y="-6.9" width="2.7" height="3.2" fill="#b6b6b6" transform="rotate(135)"/><rect x="-1.35" y="-6.9" width="2.7" height="3.2" fill="#b6b6b6" transform="rotate(180)"/><rect x="-1.35" y="-6.9" width="2.7" height="3.2" fill="#b6b6b6" transform="rotate(225)"/><rect x="-1.35" y="-6.9" width="2.7" height="3.2" fill="#b6b6b6" transform="rotate(270)"/><rect x="-1.35" y="-6.9" width="2.7" height="3.2" fill="#b6b6b6" transform="rotate(315)"/><circle r="4.7" fill="#b6b6b6"/><circle r="1.9" fill="#fafaf8"/></g></svg>
<div class="sbt" style="left:1259px;top:173px;width:20px;height:435px;"></div>
<svg style="left:1266px;top:182px" width="7" height="4" viewBox="0 0 7 4"><path d="M0 4 L3.5 0 L7 4Z" fill="#9a9a9a"/></svg>
<div class="sbh" style="left:1261px;top:194px;width:17px;height:144px;"></div>
<svg style="left:1266px;top:596px" width="7" height="4" viewBox="0 0 7 4"><path d="M0 0 L3.5 4 L7 0Z" fill="#404040"/></svg>
<div style="left:646px;top:613px;width:630px;height:1px;background:#0b447f;"></div>
<div style="left:646px;top:614px;width:630px;height:2px;background:#7190b0;"></div>
<div style="left:955px;top:614px;width:11px;height:1px;background:#fff;"></div>
<div style="left:642px;top:648px;width:639px;height:2px;background:#0b447f;"></div>
<div style="left:705px;top:625px;width:54px;height:24px;background:#ececec;border:1px solid #d2d2d2;border-bottom:none;border-radius:3px 3px 0 0;"></div>
<span style="left:714px;top:626px;line-height:22px;color:#444;font-size:12px;">コール</span>
<div style="left:653px;top:623px;width:48px;height:27px;border:2px solid #0b447f;border-bottom:none;border-radius:4px 4px 0 0;background:#fcfcfa;"></div>
<span style="left:665px;top:626px;line-height:22px;color:#1c3f72;font-size:12px;">施設</span>
<div class="bt" style="left:646px;top:658px;width:112px;height:24px;"><svg style="left:8px;top:4px" width="17" height="15" viewBox="0 0 17 15"><path d="M0 1.2 H9 M0 5.2 H5.4 M0 9.2 H5.4 M0 13.3 H12.9" stroke="#0c88dc" stroke-width="1"/><circle cx="11.4" cy="7.6" r="4.5" fill="#0c88dc"/><path d="M11.4 5 V10.2 M8.8 7.6 H14" stroke="#fff" stroke-width="1.3"/></svg><span class="t" style="left:47px;">追加</span></div>
<div class="bd" style="left:762px;top:658px;width:113px;height:24px;"><svg style="left:9px;top:5px" width="15" height="15" viewBox="0 0 15 15"><path d="M10.2 0.6 L14 4.4 L5.2 13.2 L1.4 9.4Z" fill="#a4a4a4"/><path d="M0.8 10.2 L4.4 13.8 L0.2 14.6Z" fill="#a4a4a4"/><path d="M9 1.8 L12.8 5.6" stroke="#e9e9e9" stroke-width=".8"/></svg><span class="t" style="left:47px;">編集</span></div>
<div class="bd" style="left:879px;top:658px;width:112px;height:24px;"><svg style="left:9px;top:3px" width="13" height="16" viewBox="0 0 13 16"><rect x="5" y="0" width="3" height="2.2" fill="#adadad"/><rect x="0" y="2" width="13" height="2" fill="#adadad"/><rect x="1" y="5" width="11" height="10" fill="#adadad"/><rect x="3" y="7" width="1" height="6" fill="#f6f6f6"/><rect x="6" y="7" width="1" height="6" fill="#f6f6f6"/><rect x="9" y="7" width="1" height="6" fill="#f6f6f6"/></svg><span class="t" style="left:46px;">削除</span></div>
<div class="bt" style="left:995px;top:658px;width:124px;height:24px;"><svg style="left:8px;top:3px" width="18" height="17" viewBox="0 0 18 17"><polygon points="2.7,1 2.7,3.7 0,3.7" fill="#0c88dc"/><path d="M4.1 1 H14.05 V5.9 H12.1 V2.8 H5.3 V5.9 H2.1 V11 H7 V12.9 H0 V4.1 H4.1Z" fill="#0c88dc"/><circle cx="12.5" cy="11.55" r="4.6" fill="#0c88dc" stroke="#f6f6f6" stroke-width=".5"/><path d="M12.5 9 V14.1 M9.95 11.55 H15.05" stroke="#fff" stroke-width="1.25"/></svg><span class="t" style="left:29px;">施設新規作成</span></div>
<div class="pg" style="left:642px;top:696px;width:120px;height:23px;"><i style="left:28px"></i><i style="left:58px"></i><i style="left:88px"></i><svg style="left:0;top:6px" width="120" height="10"><path d="M13.5 0.5 L9.5 4.5 L13.5 8.5" fill="none" stroke="#a6a6a6" stroke-width="1.2"/><path d="M18.5 0.5 L14.5 4.5 L18.5 8.5" fill="none" stroke="#a6a6a6" stroke-width="1.2"/><path d="M45.5 0.5 L41.5 4.5 L45.5 8.5" fill="none" stroke="#a6a6a6" stroke-width="1.2"/><path d="M72.5 0.5 L76.5 4.5 L72.5 8.5" fill="none" stroke="#a6a6a6" stroke-width="1.2"/><path d="M100.5 0.5 L104.5 4.5 L100.5 8.5" fill="none" stroke="#a6a6a6" stroke-width="1.2"/><path d="M105.5 0.5 L109.5 4.5 L105.5 8.5" fill="none" stroke="#a6a6a6" stroke-width="1.2"/></svg></div>
<div class="in" style="left:777px;top:696px;width:36px;height:23px;text-align:right;padding-right:7px;line-height:20px;color:#444;">1</div>
<span style="left:817px;top:696px;line-height:22px;font-size:13px;word-spacing:2px;letter-spacing:.5px;">/ 1</span>
<div style="left:844px;top:696px;width:1px;height:23px;background:#d4d4d4;"></div>
<span style="left:855px;top:696px;line-height:22px;font-size:13px;letter-spacing:.65px;"><b style="position:static;font-family:DejaVu Sans,sans-serif;font-size:12.5px;letter-spacing:0">1</b> 件中 (1 - 1 件目)</span>
<div class="gh" style="left:642px;top:725px;width:616px;height:28px;"></div>
<div class="gh" style="left:1262px;top:725px;width:18px;height:28px;"></div>
<div style="left:642px;top:753px;width:616px;height:169px;background:#fff;"></div>
<div class="vl" style="left:716px;top:725px;width:1px;height:55px;"></div>
<div class="vl" style="left:757px;top:725px;width:1px;height:55px;"></div>
<div class="vl" style="left:1007px;top:725px;width:1px;height:55px;"></div>
<div class="vl" style="left:1257px;top:725px;width:1px;height:55px;"></div>
<div class="hl" style="left:642px;top:752px;width:616px;height:1px;"></div>
<div class="hl" style="left:642px;top:725px;width:616px;height:1px;"></div>
<div class="hl" style="left:1262px;top:725px;width:18px;height:1px;"></div>
<div class="hl" style="left:642px;top:779px;width:616px;height:1px;"></div>
<span style="left:650px;top:726px;line-height:28px;">施設番号</span>
<svg style="left:698px;top:738px" width="7" height="4" viewBox="0 0 7 4"><path d="M0 4 L3.5 0 L7 4Z" fill="#333"/></svg>
<span style="left:726px;top:727.5px;line-height:27px;font-family:DejaVu Sans,sans-serif;font-size:13px;">*</span>
<span style="left:765px;top:726px;line-height:28px;">施設名</span>
<span style="left:1015px;top:726px;line-height:28px;">部署名</span>
<span style="left:643px;top:754px;width:69px;text-align:right;line-height:27px;font-size:11px;letter-spacing:.5px;">1001</span>
<span style="left:734px;top:755px;line-height:27px;font-family:DejaVu Sans,sans-serif;font-size:12.5px;">*</span>
<span style="left:763px;top:754px;line-height:27px;font-size:11px;letter-spacing:.5px;">(未設定)</span>
<div class="sbt" style="left:1258px;top:753px;width:22px;height:170px;"></div>
<svg style="left:1265px;top:762px" width="7" height="4" viewBox="0 0 7 4"><path d="M0 4 L3.5 0 L7 4Z" fill="#a0a0a0"/></svg>
<svg style="left:1265px;top:909px" width="7" height="4" viewBox="0 0 7 4"><path d="M0 0 L3.5 4 L7 0Z" fill="#a0a0a0"/></svg>
<div style="left:0px;top:923px;width:1281px;height:1px;background:#0a0a0a;"></div>
</body></html>
